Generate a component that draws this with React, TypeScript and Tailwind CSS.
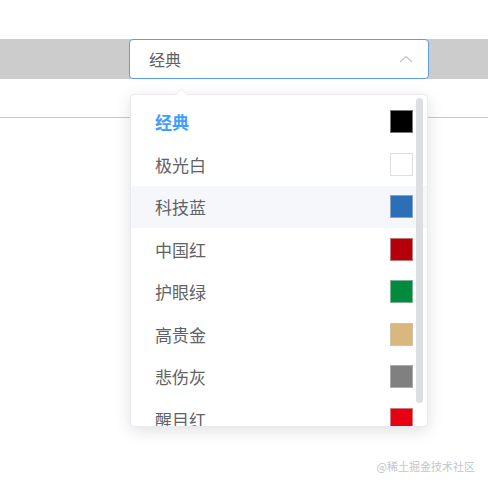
import React from "react";

const items = [
  { name: "经典", color: "#000000" },
  { name: "极光白", color: "#ffffff" },
  { name: "科技蓝", color: "#2a6fb8" },
  { name: "中国红", color: "#b5000c" },
  { name: "护眼绿", color: "#008c3c" },
  { name: "高贵金", color: "#dbb780" },
  { name: "悲伤灰", color: "#808080" },
  { name: "醒目红", color: "#e60012" },
];

export default function App() {
  return (
    <div
      className="relative w-[488px] h-[486px] bg-white overflow-hidden"
      style={{ fontFamily: '"Noto Sans CJK SC", "Noto Sans", sans-serif' }}
    >
      <div className="h-[39px]" />
      <div className="h-[40px] bg-[#cccccc] flex pl-[129px]">
        <div className="w-[300px] h-[40px] bg-white border border-[#5a9ee8] rounded-[4px] flex items-center justify-between pl-[19px] pr-[15px]">
          <span className="text-[16px] text-[#606266] leading-none">经典</span>
          <svg width="14" height="8" viewBox="0 0 14 8" fill="none">
            <path d="M1 7L7 1.5L13 7" stroke="#c0c4cc" strokeWidth="1.2" />
          </svg>
        </div>
      </div>
      <div className="mt-[38px] h-px bg-[#c8c8c8]" />

      {/* dropdown */}
      <div className="absolute top-[94px] left-[130px] w-[298px] h-[333px] bg-white border border-[#e8eaef] rounded-[4px] shadow-[0_4px_16px_0_rgba(0,0,0,0.12)]">
        <div className="absolute -top-[5px] left-[46px] w-[9px] h-[9px] bg-white border-l border-t border-[#eceef2] rotate-45" />
        <div className="relative h-full overflow-hidden rounded-[4px] pt-[5.5px]">
          {items.map((it, i) => (
            <div
              key={it.name}
              className={
                "h-[42.5px] flex items-center justify-between pl-[24px] pr-[14px] " +
                (i === 2 ? "bg-[#f5f7fa]" : "")
              }
            >
              <span
                className={
                  i === 0
                    ? "text-[17px] font-bold text-[#409eff]"
                    : "text-[17px] text-[#606266]"
                }
              >
                {it.name}
              </span>
              <div
                className="w-[23px] h-[23px] border border-[#c8c8c899]"
                style={{ backgroundColor: it.color }}
              />
            </div>
          ))}
          <div className="absolute top-[3px] right-[4px] w-[7px] h-[305px] rounded-full bg-[#dcdee2]" />
        </div>
      </div>

      <div className="absolute right-[13px] bottom-[14px] text-[11px] text-[#c4c6ca] leading-none">
        @稀土掘金技术社区
      </div>
    </div>
  );
}
